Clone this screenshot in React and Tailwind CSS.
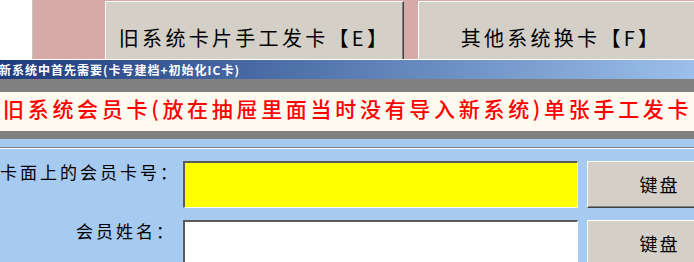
import React from "react";

const fuente = { fontFamily: '"Noto Sans CJK SC", "Liberation Sans", sans-serif' };

function BotonSuperior({ texto, ancho }) {
  return (
    <div
      className={`${ancho} mt-[1px] h-[58px] shrink-0 border-l border-t border-r border-white border-r-[#404040] bg-[#d4d0c8] pt-[24px] text-center text-[20px] leading-[24px] tracking-[3.3px] text-black shadow-[inset_-1px_0_0_#808080]`}
    >
      {texto}
    </div>
  );
}

function Fila({ etiqueta, fondo }) {
  return (
    <div className="flex h-[47px] shrink-0">
      <div className="w-[183px] shrink-0 whitespace-nowrap pr-[7px] pt-[1px] text-right text-[17px] leading-[20px] tracking-[3px] text-black">
        {etiqueta}
      </div>
      <div className={`h-full w-[395px] shrink-0 border-l-2 border-t-2 border-r border-b border-l-[#5a5a5a] border-t-[#5a5a5a] border-r-white border-b-white ${fondo}`} />
      <div className="ml-[9px] flex h-full w-[144px] shrink-0 items-center justify-center border-l border-t border-b border-l-white border-t-white border-b-[#404040] bg-[#d4d0c8] text-[18px] tracking-[2px] text-black shadow-[inset_0_-1px_0_#808080]">
        键盘
      </div>
    </div>
  );
}

export default function App() {
  return (
    <div className="flex h-[262px] w-[694px] flex-col overflow-hidden bg-[#a6caf0]" style={fuente}>
      <div className="flex h-[60px] shrink-0 border-b border-white bg-[#d6aaa9]">
        <div className="w-[33px] shrink-0 border-r border-[#c8c4bc] bg-white" />
        <div className="w-[72px] shrink-0" />
        <BotonSuperior texto="旧系统卡片手工发卡【E】" ancho="w-[299px]" />
        <div className="w-[14px] shrink-0" />
        <BotonSuperior texto="其他系统换卡【F】" ancho="w-[286px]" />
      </div>
      <div className="flex h-[19px] shrink-0 items-center bg-gradient-to-r from-[#1e3b7d] to-[#9cc0ea]">
        <span className="-ml-[1px] whitespace-nowrap text-[12px] font-bold leading-none tracking-[1px] text-white">
          新系统中首先需要(卡号建档+初始化IC卡)
        </span>
      </div>
      <div className="h-[13px] shrink-0 bg-[#808080]" />
      <div className="h-[39px] shrink-0 whitespace-nowrap bg-[#fffaf0] pl-[3px] pt-[4px] text-[21px] font-medium leading-[24px] tracking-[3.7px] text-[#ff0000]">
        旧系统会员卡(放在抽屉里面当时没有导入新系统)单张手工发卡
      </div>
      <div className="h-[8px] shrink-0 bg-[#808080]" />
      <div className="h-[8px] shrink-0" />
      <div className="h-[2px] shrink-0 border-t border-b border-t-[#808080] border-b-white" />
      <div className="flex flex-col gap-[12px] pt-[12px]">
        <Fila etiqueta="卡面上的会员卡号：" fondo="bg-[#ffff00]" />
        <Fila etiqueta="会员姓名：" fondo="bg-white" />
      </div>
    </div>
  );
}
